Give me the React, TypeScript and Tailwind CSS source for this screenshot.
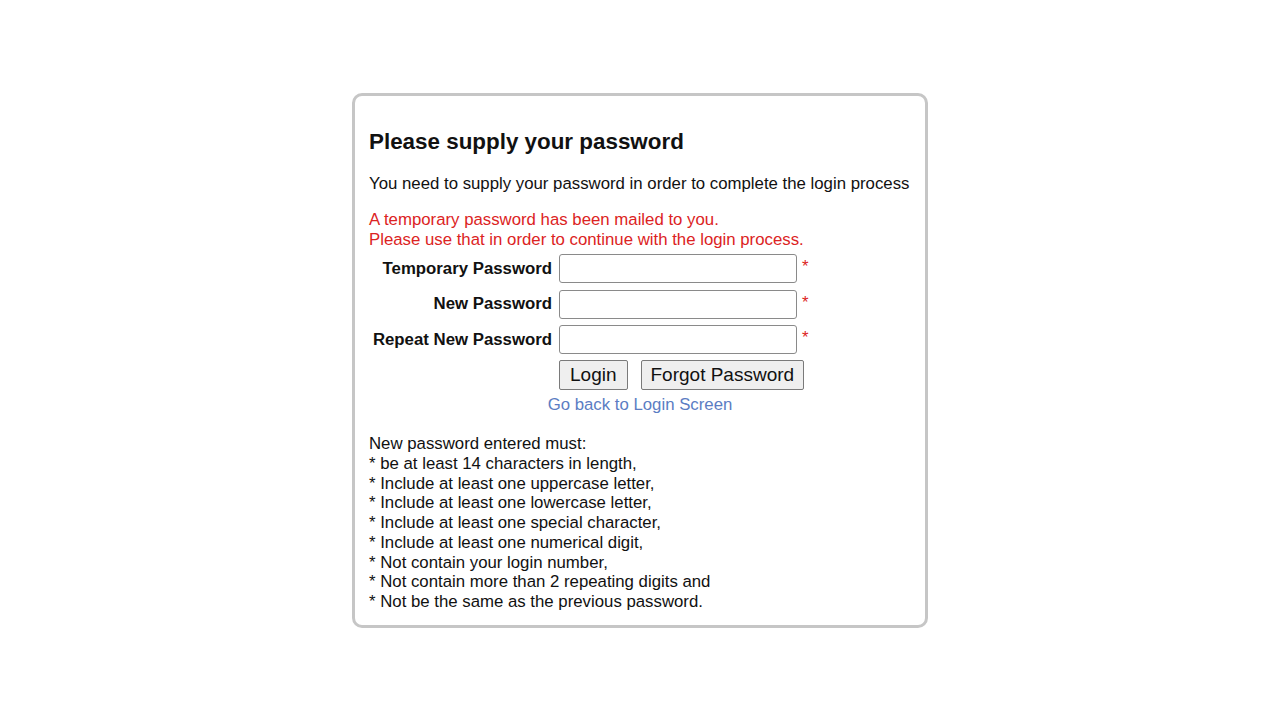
import React from 'react';

const rules = [
  'New password entered must:',
  '* be at least 14 characters in length,',
  '* Include at least one uppercase letter,',
  '* Include at least one lowercase letter,',
  '* Include at least one special character,',
  '* Include at least one numerical digit,',
  '* Not contain your login number,',
  '* Not contain more than 2 repeating digits and',
  '* Not be the same as the previous password.',
];

const fields = ['Temporary Password', 'New Password', 'Repeat New Password'];

const App = () => {
  return (
    <div className="min-h-screen bg-white font-['Liberation_Sans',Arial,sans-serif] text-[#111]">
      <div className="flex justify-center pt-[93px]">
        <div className="w-[576px] rounded-[10px] border-[3px] border-[#c6c6c6] bg-white pl-[14px] pr-[12px] pt-[34px] pb-[13px]">
          <h2 className="text-[22.4px] font-bold leading-[24px]">Please supply your password</h2>

          <p className="mt-[20px] text-[16.8px] leading-[20px]">
            You need to supply your password in order to complete the login process
          </p>

          <p className="mt-[16px] text-[16.8px] leading-[20px] text-[#dc2323]">
            A temporary password has been mailed to you.
            <br />
            Please use that in order to continue with the login process.
          </p>

          {/* Form rows */}
          <div className="mt-[4px] flex flex-col gap-[6.5px]">
            {fields.map((label) => (
              <div key={label} className="flex items-center">
                <label className="w-[190px] pr-[7px] text-right text-[16.8px] font-bold leading-[20px]">
                  {label}
                </label>
                <input
                  type="password"
                  className="h-[29px] w-[238px] rounded-[3px] border border-[#8a8a8a] bg-white px-2 outline-none"
                />
                <span className="ml-[5px] self-start pt-[3px] text-[16.8px] leading-[20px] text-[#dc2323]">*</span>
              </div>
            ))}
          </div>

          <div className="mt-[6px] flex gap-[13px] pl-[190px]">
            <button className="h-[30px] rounded-[2px] border border-[#7a7a7a] bg-[#efefef] px-[10px] text-[19px] leading-[20px]">
              Login
            </button>
            <button className="h-[30px] rounded-[2px] border border-[#7a7a7a] bg-[#efefef] px-[9px] text-[19px] leading-[20px]">
              Forgot Password
            </button>
          </div>

          <div className="mt-[5px] pr-[2px] text-center text-[16.8px] leading-[20px] text-[#5b7dc3]">
            <a href="#">Go back to Login Screen</a>
          </div>

          <div className="mt-[19px] text-[16.8px] leading-[19.75px]">
            {rules.map((r) => (
              <div key={r}>{r}</div>
            ))}
          </div>
        </div>
      </div>
    </div>
  );
};

export default App;
